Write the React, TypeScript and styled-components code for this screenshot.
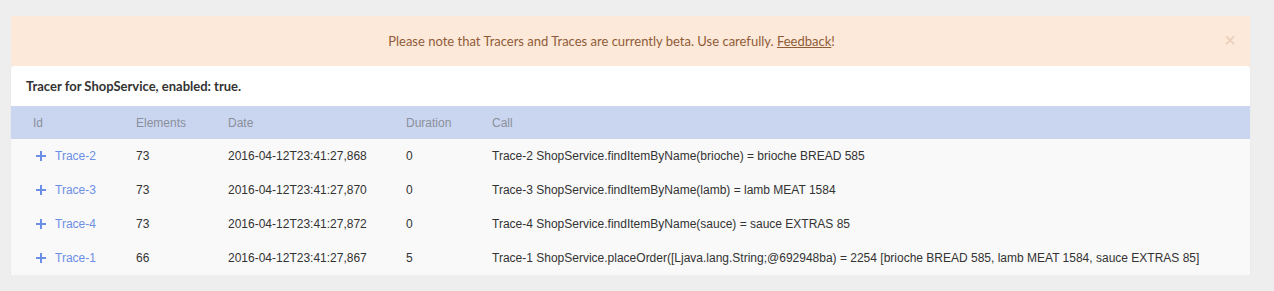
import styled, { createGlobalStyle } from "styled-components";

interface Trace {
  id: string;
  elements: number;
  date: string;
  duration: number;
  call: string;
}

const traces: Trace[] = [
  {
    id: "Trace-2",
    elements: 73,
    date: "2016-04-12T23:41:27,868",
    duration: 0,
    call: "Trace-2 ShopService.findItemByName(brioche) = brioche BREAD 585",
  },
  {
    id: "Trace-3",
    elements: 73,
    date: "2016-04-12T23:41:27,870",
    duration: 0,
    call: "Trace-3 ShopService.findItemByName(lamb) = lamb MEAT 1584",
  },
  {
    id: "Trace-4",
    elements: 73,
    date: "2016-04-12T23:41:27,872",
    duration: 0,
    call: "Trace-4 ShopService.findItemByName(sauce) = sauce EXTRAS 85",
  },
  {
    id: "Trace-1",
    elements: 66,
    date: "2016-04-12T23:41:27,867",
    duration: 5,
    call: "Trace-1 ShopService.placeOrder([Ljava.lang.String;@692948ba) = 2254 [brioche BREAD 585, lamb MEAT 1584, sauce EXTRAS 85]",
  },
];

const GlobalStyle = createGlobalStyle`
  html, body {
    margin: 0;
    padding: 0;
    background: #eeeeee;
  }
  body {
    font-family: Lato, "Liberation Sans", sans-serif;
  }
`;

const Page = styled.div`
  padding: 16px 24px 0 11px;
`;

const Banner = styled.div`
  position: relative;
  height: 50px;
  display: flex;
  align-items: center;
  justify-content: center;
  padding-right: 38px;
  background: #fde9da;
  color: #8f5c37;
  font-size: 13px;
`;

const FeedbackLink = styled.a`
  color: #8f5c37;
  text-decoration: underline;
`;

const Close = styled.span`
  position: absolute;
  right: 14px;
  top: 13px;
  font-size: 20px;
  color: #e9cdb8;
  font-family: "Liberation Sans", sans-serif;
`;

const Card = styled.div`
  background: #ffffff;
  border-radius: 4px 4px 0 0;
  box-shadow: 0 1px 1px rgba(0, 0, 0, 0.12);
`;

const Title = styled.div`
  height: 40px;
  display: flex;
  align-items: center;
  padding-left: 15px;
  font-size: 13px;
  font-weight: 700;
  color: #333333;
`;

const Table = styled.div`
  font-family: "Liberation Sans", Arial, sans-serif;
  font-size: 12px;
`;

const Row = styled.div<{ $head?: boolean }>`
  display: grid;
  grid-template-columns: 103px 92px 178px 86px 1fr;
  align-items: center;
  height: ${(p) => (p.$head ? 33 : 34)}px;
  padding-left: 22px;
  background: ${(p) => (p.$head ? "#cad6f0" : "#f9f9f9")};
  color: ${(p) => (p.$head ? "#8a8f9c" : "#333333")};
`;

const IdCell = styled.div`
  display: flex;
  align-items: center;
  gap: 9px;
`;

const Plus = styled.span`
  width: 10px;
  height: 10px;
  margin-left: 3px;
  position: relative;
  &::before,
  &::after {
    content: "";
    position: absolute;
    background: #6d8ee6;
  }
  &::before {
    left: 0;
    top: 4px;
    width: 10px;
    height: 2px;
  }
  &::after {
    left: 4px;
    top: 0;
    width: 2px;
    height: 10px;
  }
`;

const TraceLink = styled.a`
  color: #6d8ee6;
  text-decoration: none;
`;

const App = () => {
  return (
    <>
      <GlobalStyle />
      <Page>
        <Banner>
          <span>
            Please note that Tracers and Traces are currently beta. Use carefully.{" "}
            <FeedbackLink>Feedback</FeedbackLink>!
          </span>
          <Close>×</Close>
        </Banner>
        <Card>
          <Title>Tracer for ShopService, enabled: true.</Title>
          <Table>
            <Row $head>
              <div>Id</div>
              <div>Elements</div>
              <div>Date</div>
              <div>Duration</div>
              <div>Call</div>
            </Row>
            {traces.map((t) => (
              <Row key={t.id}>
                <IdCell>
                  <Plus />
                  <TraceLink>{t.id}</TraceLink>
                </IdCell>
                <div>{t.elements}</div>
                <div>{t.date}</div>
                <div>{t.duration}</div>
                <div>{t.call}</div>
              </Row>
            ))}
          </Table>
        </Card>
      </Page>
    </>
  );
};

export default App;
